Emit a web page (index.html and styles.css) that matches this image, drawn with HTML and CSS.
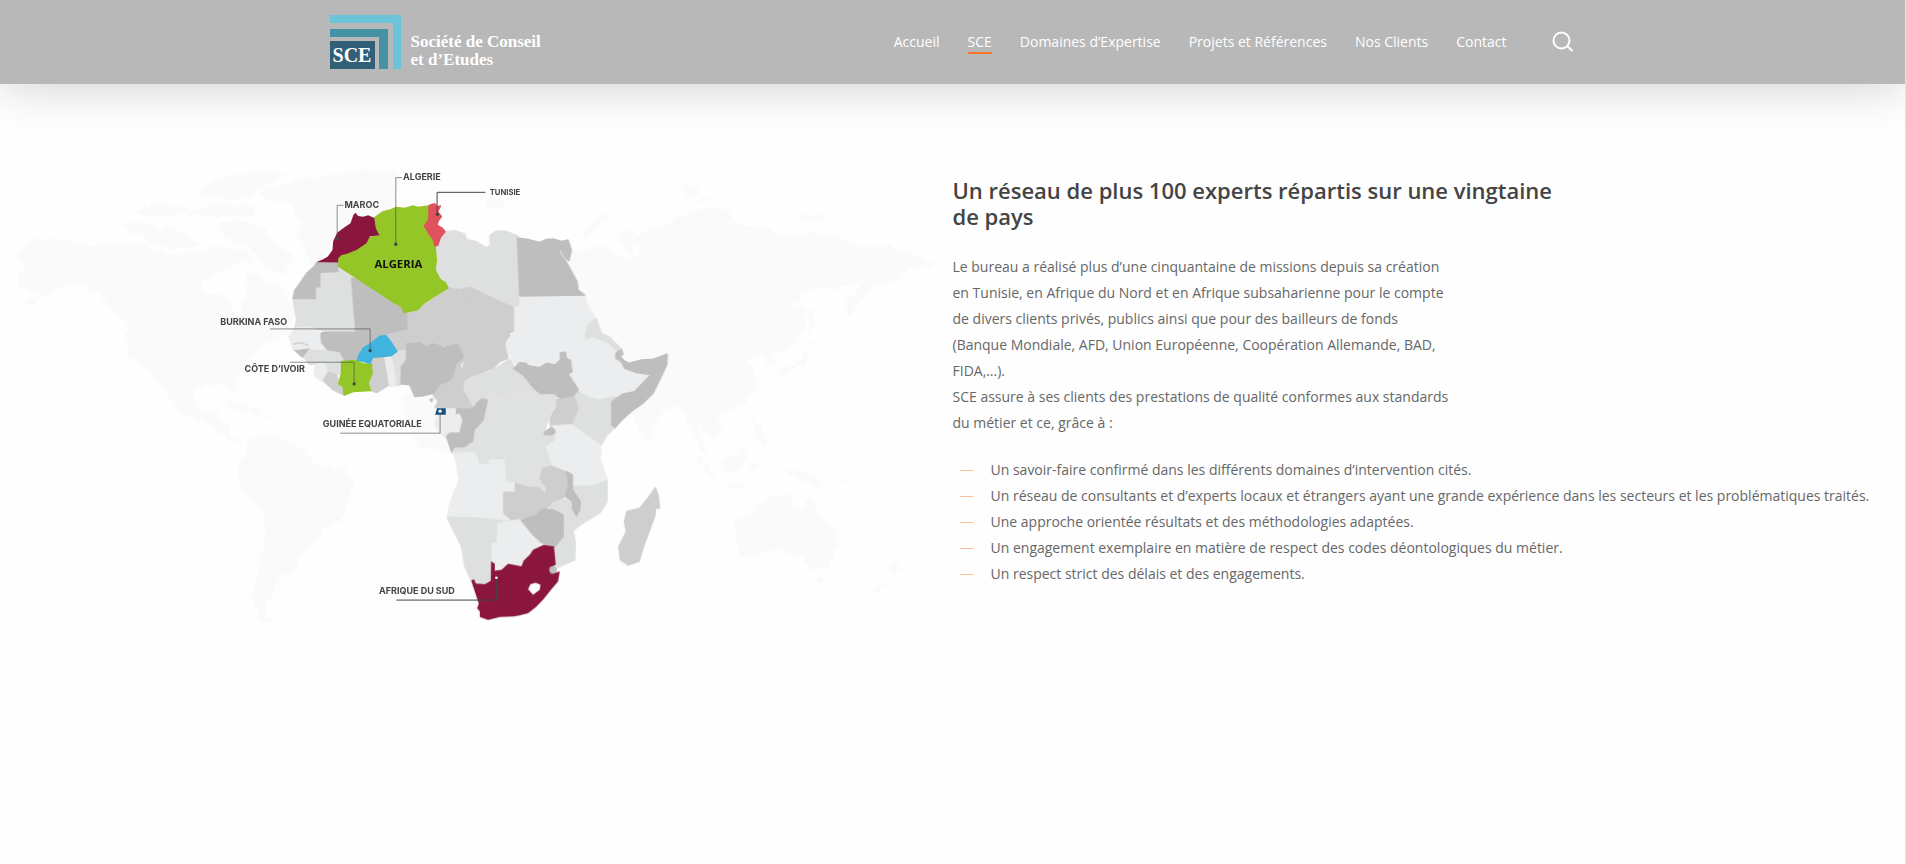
FILE: index.html
```html
<!DOCTYPE html>
<html lang="fr">
<head>
<meta charset="utf-8">
<meta name="viewport" content="width=device-width, initial-scale=1">
<title>SCE - Société de Conseil et d’Etudes</title>
<link rel="stylesheet" href="styles.css">
</head>
<body>
<header class="site-header">
  <div class="header-inner">
    <a class="logo" href="#" aria-label="Société de Conseil et d’Etudes">
      <span class="logo-mark">
        <svg class="logo-shape" viewBox="0 0 71 54" aria-hidden="true">
          <path fill="#6cc4da" d="M0 0h71v54h-8V8H0z"/>
          <path fill="#4492a3" d="M0 14h58v40h-9V22H0z"/>
          <path fill="#305f77" d="M0 26h45v28H0z"/>
        </svg>
        <span class="logo-sce">SCE</span>
      </span>
      <span class="logo-name">Société de Conseil<br>et d’Etudes</span>
    </a>
    <nav class="main-nav" aria-label="Menu principal">
      <a href="#">Accueil</a>
      <a class="current" href="#" aria-current="page">SCE</a>
      <a href="#">Domaines d’Expertise</a>
      <a href="#">Projets et Références</a>
      <a href="#">Nos Clients</a>
      <a href="#">Contact</a>
    </nav>
    <button class="search" type="button" aria-label="Rechercher">
      <svg viewBox="0 0 22 22" aria-hidden="true"><circle cx="9.5" cy="9.5" r="8"/><path d="M15 15l5.5 5"/></svg>
    </button>
  </div>
</header>

<main class="network">
  <div class="map">
    <svg viewBox="0 0 2859 1440" role="img" aria-label="Carte des pays d’intervention">
      <defs>
        <filter id="coast" x="0" y="0" width="1" height="1" color-interpolation-filters="sRGB">
          <feTurbulence type="fractalNoise" baseFrequency="0.05" numOctaves="2" seed="4"/>
          <feDisplacementMap in="SourceGraphic" scale="24" xChannelSelector="R" yChannelSelector="G"/>
        </filter>
      </defs>
      <g class="world" filter="url(#coast)">
        <path d="M45 285L90 240L130 235L200 240L290 255L370 245L440 255L500 285L560 280L620 270L640 250L690 270L740 270L760 300L700 315L640 345L605 370L610 400L670 410L700 430L700 455L720 465L730 425L740 395L735 345L770 340L800 365L840 375L870 420L885 450L870 520L810 545L770 570L740 620L705 655L710 700L695 705L675 670L620 675L585 690L580 725L600 755L640 755L655 745L660 780L690 800L700 840L740 845L720 855L670 830L620 785L550 765L530 740L490 690L440 620L385 590L378 520L385 500L330 440L290 395L220 370L180 385L100 425L50 445L120 400L60 385L45 350L80 320Z"/>
        <path d="M835 75L900 55L1000 45L1090 28L1190 38L1210 70L1185 110L1190 150L1150 165L1060 200L1000 240L970 290L960 330L930 320L915 270L890 230L905 190L870 130L800 120L780 95Z"/>
        <path d="M600 90L640 60L720 40L820 35L860 45L800 75L740 110L690 120L620 105Z"/>
        <path d="M370 195L390 185L470 195L470 220L400 225Z"/>
        <path d="M440 215L500 200L560 220L600 255L520 270L430 245Z"/>
        <path d="M390 155L470 130L560 140L540 165L430 170Z"/>
        <path d="M560 150L650 135L760 140L770 165L680 170L590 170Z"/>
        <path d="M640 190L720 180L790 205L840 260L880 290L850 345L790 320L750 260L690 245Z"/>
        <path d="M665 730L720 732L790 755L770 765L700 745ZM780 765L830 768L800 775Z"/>
        <path d="M740 845L780 820L850 835L900 860L950 910L1040 935L1068 965L1045 1020L1020 1085L970 1105L940 1150L900 1190L890 1230L840 1250L820 1300L795 1340L800 1370L825 1388L780 1380L755 1320L775 1240L790 1150L795 1060L750 1020L710 960L715 920L740 880Z"/>
        <path d="M1215 705L1300 690L1400 720L1400 860L1340 870L1260 865L1215 790Z"/>
        <path d="M1450 130L1480 110L1520 120L1500 150L1470 145Z"/>
        <g transform="translate(1800)">
          <path d="M-100 275L-20 265L10 255L60 285L100 298L125 265L105 250L110 230L140 205L210 190L240 165L330 140L400 155L380 190L500 200L540 230L590 230L640 215L740 240L800 265L860 255L930 275L960 295L1005 305L990 325L950 315L900 345L910 360L820 375L770 440L745 475L735 430L790 370L805 350L760 375L690 385L640 385L580 435L620 450L618 500L580 555L520 585L530 620L500 610L480 580L440 600L465 625L468 690L430 735L360 765L345 760L370 800L340 840L300 800L290 760L300 830L330 890L320 900L285 830L240 735L200 750L165 790L150 845L135 848L100 770L60 720L-100 560Z"/>
          <path d="M-55 225L-10 170L70 148L10 180L-40 232ZM60 215L100 205L100 285L60 250ZM250 75L290 85L300 110L260 105ZM300 115L345 115L310 125ZM595 162L660 165L695 177L600 180ZM920 235L945 235L930 240Z"/>
          <path d="M628 445L638 450L645 500L630 530ZM625 540L655 545L635 562ZM625 565L620 600L570 630L540 655L535 640L600 605ZM460 720L470 712L462 738ZM460 768L475 790L505 850L490 860L462 800Z"/>
          <path d="M265 868L310 905L350 945L340 955L300 915ZM350 960L400 972L460 985L400 985ZM370 900L410 890L440 865L440 910L410 940L375 930ZM450 910L490 905L465 930L460 950ZM545 920L580 935L640 940L690 990L640 980L590 955ZM700 945L740 960L780 990L720 960Z"/>
          <path d="M405 1085L460 1060L500 1015L550 1005L585 1005L575 1035L610 1055L630 1000L655 1060L710 1110L715 1150L685 1225L640 1230L610 1195L575 1185L540 1165L480 1180L420 1195ZM648 1250L674 1252L660 1274ZM873 1202L908 1225L880 1250ZM875 1248L835 1305L818 1297Z"/>
        </g>
      </g>

      <g class="africa" transform="translate(600)">
        <path class="c2" d="M736 215L765 212L795 222L800 238L830 245L858 263L870 258L871 225L890 213L920 214L955 228L960 440L945 445L815 382L780 390L745 384L735 366L722 360L708 330L710 300L706 258L714 256L722 232Z"/>
        <path class="c2" d="M413 318L470 355L455 355L468 517L385 517L362 510L345 508L325 500L300 500L284 505L290 480L280 425L279 416L346 416L346 382L360 380L360 337L413 335Z"/>
        <path class="c4" d="M349 309L413 309L413 335L360 337L360 380L346 382L346 416L279 416L285 390L300 370L320 340L345 318Z"/>
        <path class="c4" d="M455 355L475 355L583 428L606 440L612 458L624 458L624 510L580 522L560 524L540 530L510 550L490 572L475 590L470 602L430 602L418 578L380 574L362 550L357 535L365 518L390 517L468 517Z"/>
        <path class="c3" d="M624 458L652 450L745 384L780 390L808 382L806 470L775 520L775 555L740 556L700 560L660 552L620 552L612 580L594 575L575 545L560 524L624 510Z"/>
        <path class="c3" d="M810 382L945 445L945 515L930 518L932 545L918 565L925 595L900 605L880 625L840 640L808 652L790 620L795 590L780 555L775 520L806 470Z"/>
        <path class="c1" d="M284 505L325 500L358 515L362 550L380 572L330 570L300 565L280 570L268 530Z"/>
        <path class="river" d="M280 553L300 548L326 556"/>
        <path class="c4" d="M285 572L328 568L325 580L308 592Z"/>
        <path class="c2" d="M328 570L380 574L418 578L430 602L425 640L410 645L395 635L382 640L375 620L350 612L330 615L312 592Z"/>
        <path class="c1" d="M342 625L355 610L378 615L382 635L365 665L345 650Z"/>
        <path class="c3" d="M370 662L385 637L410 645L420 675L432 685L432 705L400 690Z"/>
        <path class="c3" d="M512 612L515 594L555 592L568 675L530 698L508 690L505 670L517 640Z"/>
        <path class="c2" d="M575 592L594 575L615 572L620 600L605 620L603 675L585 678L583 640Z"/>
        <path class="c1" d="M555 592L575 597L585 650L585 678L570 680L565 650Z"/>
        <path class="c3" d="M790 560L795 590L780 620L810 640L808 655L795 665L793 690L818 733L818 748L705 744L715 725L700 705L700 685L740 665L770 620Z"/>
        <path class="c4" d="M620 552L660 549L680 560L700 552L735 562L775 553L790 590L770 610L755 655L738 668L720 672L700 700L670 708L645 710L630 675L603 672L605 620L620 600Z"/>
        <path class="c4" d="M691 720L698 716L696 726Z"/>
      </g>
      <g class="africa" transform="translate(1320 120)">
        <path class="c1" d="M240 288L435 285L445 320L470 357L445 375L437 415L430 430L415 455L400 490L396 510L380 480L377 457L362 458L362 480L345 495L300 500L245 492L225 490L213 475L200 445L200 425L225 395L225 322L240 320Z"/>
        <path class="c4" d="M233 114L265 118L300 127L320 118L340 117L365 124L385 120L395 150L388 182L380 178L362 150L356 152L382 190L412 245L415 270L435 285L240 288Z"/>
        <path class="c1" d="M437 415L460 410L500 425L530 455L535 475L555 505L600 520L633 524L585 575L550 582L530 590L480 600L450 595L415 575L400 540L385 522L398 505L392 480L415 455Z"/>
        <path class="c2" d="M470 357L485 400L510 412L548 450L538 458L500 425L460 410L437 415L445 375Z"/>
        <path class="c2" d="M415 575L450 595L480 600L530 590L516 610L516 675L527 683L500 708L485 735L460 720L395 675L416 625L403 592Z"/>
        <path class="c4" d="M528 475L530 458L546 450L550 462L542 470L556 484L570 490L605 480L640 478L683 462L681 495L660 540L640 580L610 610L575 635L545 662L527 683L516 675L516 606L550 582L585 575L633 524L590 518L555 505L545 485Z"/>
        <path class="c2" d="M75 545L95 532L150 515L190 490L210 478L225 502L250 525L285 573L225 580L190 588L145 577L140 598L120 600L98 613L85 590L73 570Z"/>
        <path class="c4" d="M222 506L240 488L258 490L268 498L300 503L320 490L345 495L362 480L362 458L377 457L380 475L392 482L397 515L385 522L400 545L416 570L400 590L365 598L345 585L300 585L280 562L250 525Z"/>
        <path class="c3" d="M345 598L365 598L403 590L416 625L395 675L332 678L330 650L348 625Z"/>
        <path class="c1" d="M14 627L50 627L50 640L70 640L60 695L30 700L20 715L0 700L-15 675L-8 645L14 645Z"/>
      </g>
      <g class="africa" transform="translate(1200 720)">
        <path class="c0" d="M265 -23L310 -12L345 -20L405 -27L420 -15L465 -15L468 10L450 50L435 90L438 140L457 195L430 205L420 240L440 270L440 285L420 265L385 260L345 250L318 247L312 180L270 180L268 195L237 193L228 160L153 158L180 140L215 135L225 90L250 60Z"/>
        <path class="c4" d="M170 27L218 28L230 10L245 -2L263 0L250 60L223 90L218 125L195 140L165 142L155 155L140 110L150 100L180 100L190 60L182 40L170 40Z"/>
        <path class="c1" d="M160 160L228 160L237 193L268 195L270 180L312 180L318 247L347 250L347 278L312 278L312 345L335 362L290 365L240 355L142 353L150 310L178 240L170 190Z"/>
        <path class="c3" d="M312 278L347 278L347 250L385 262L420 265L440 285L440 265L420 235L430 205L457 198L500 215L507 250L497 290L450 318L410 345L365 362L335 360L312 340Z"/>
        <path class="c2" d="M518 255L580 255L622 238L622 305L600 340L550 370L520 392L527 430L525 480L470 505L465 440L490 410L490 345L450 325L460 308L497 298L518 305L518 325L530 348L542 320L518 270Z"/>
        <path class="c1" d="M455 78L515 75L600 135L605 155L600 175L622 238L580 255L520 255L518 225L500 212L457 195L440 140L462 118Z"/>
        <path class="c4" d="M500 215L518 225L518 270L542 305L540 330L530 348L518 325L518 305L497 290L507 250Z"/>
        <path class="c2" d="M440 110L466 106L460 122L440 135Z"/>
        <path class="c4" d="M433 97L455 82L464 90L466 98L455 105L435 105Z"/>
        <path class="c2" d="M142 353L240 355L330 365L294 370L292 430L275 432L273 540L255 552L230 550L213 540L195 500L185 440L160 390Z"/>
        <path class="c1" d="M294 370L360 360L400 405L425 430L390 460L365 495L325 492L285 515L277 485L277 430L292 430Z"/>
        <path class="c4" d="M365 362L410 345L428 327L460 330L490 345L490 410L465 440L425 428L400 405Z"/>
        <path class="c3" d="M767 263L775 285L780 325L768 325L765 350L735 430L718 485L685 496L662 480L657 440L680 395L674 365L682 335L720 325L745 295Z"/>
        <path class="maroon" d="M214 542L223 538L228 551L255 553L273 543L274 484L285 492L285 513L305 510L325 492L365 499L372 482L390 465L400 450L432 435L463 440L468 495L450 505L455 522L480 515L475 545L455 568L430 600L408 622L385 640L355 648L340 650L300 652L265 661L240 652L240 635L232 625L237 612Z"/>
        <circle class="c4" cx="460" cy="510" r="11"/>
        <path class="hole" d="M385 568L392 553L408 549L422 555L420 570L400 585Z"/>
      </g>
      <g class="africa" transform="translate(600)">
        <path class="green" d="M525 173L550 155L572 150L590 142L615 145L640 138L655 142L688 138L685 165L687 180L674 198L690 225L706 258L710 300L706 330L722 360L737 368L745 384L700 412L670 432L652 450L612 458L606 440L583 428L415 318L415 296L425 285L460 276L500 250L510 233L539 226L530 215Z"/>
        <path class="maroon" d="M349 307L370 298L384 290L398 270L400 244L412 218L430 205L452 190L461 164L467 158L475 168L490 170L505 166L524 174L527 200L532 214L539 226L510 230L500 250L470 270L440 282L425 285L415 296L415 308Z"/>
        <path class="red" d="M688 136L705 131L712 140L722 138L714 155L725 170L716 182L712 195L728 205L736 215L722 232L714 256L706 258L700 238L690 225L674 198L687 180Z"/>
        <path class="green" d="M425 605L450 602L470 602L490 612L515 612L517 640L505 670L513 692L460 695L433 706L430 680L416 672L425 640Z"/>
        <path class="blue" d="M470 602L475 585L490 562L510 550L540 527L560 525L575 545L594 575L575 590L520 594L512 612L490 607Z"/>
        <path class="navy" d="M712 745L738 745L738 765L706 765Z"/>
      </g>

      <g class="leads">
        <path d="M1207 53H1188V252M1031 136H1012V236M810 507H1111V572M870 607H1063V672M1021 820H1321V756"/>
        <path class="strong" d="M1457 97H1312V163M1190 1321H1490V1256"/>
      </g>
      <g class="dots">
        <circle cx="1188" cy="253" r="5"/><circle cx="1012" cy="236" r="5"/><circle cx="1111" cy="572" r="5"/><circle cx="1063" cy="672" r="5"/><circle cx="1313" cy="163" r="5"/>
        <circle class="light" cx="1321" cy="754" r="5"/><circle class="light" cx="1490" cy="1254" r="4"/>
      </g>
      <g class="labels">
        <text x="1210" y="61">ALGERIE</text>
        <text x="1034" y="143">MAROC</text>
        <text class="small" x="1470" y="105">TUNISIE</text>
        <text x="661" y="496">BURKINA FASO</text>
        <text x="734" y="637">CÔTE D’IVOIR</text>
        <text x="969" y="802">GUINÉE EQUATORIALE</text>
        <text x="1138" y="1303">AFRIQUE DU SUD</text>
        <text class="country" x="1124" y="323">ALGERIA</text>
      </g>
    </svg>
  </div>

  <section class="copy">
    <h1>Un réseau de plus 100 experts répartis sur une vingtaine de pays</h1>
    <p>Le bureau a réalisé plus d’une cinquantaine de missions depuis sa création en Tunisie, en Afrique du Nord et en Afrique subsaharienne pour le compte de divers clients privés, publics ainsi que pour des bailleurs de fonds (Banque Mondiale, AFD, Union Européenne, Coopération Allemande, BAD, FIDA,…).<br>SCE assure à ses clients des prestations de qualité conformes aux standards du métier et ce, grâce à :</p>
    <ul>
      <li>Un savoir-faire confirmé dans les différents domaines d’intervention cités.</li>
      <li>Un réseau de consultants et d’experts locaux et étrangers ayant une grande expérience dans les secteurs et les problématiques traités.</li>
      <li>Une approche orientée résultats et des méthodologies adaptées.</li>
      <li>Un engagement exemplaire en matière de respect des codes déontologiques du métier.</li>
      <li>Un respect strict des délais et des engagements.</li>
    </ul>
  </section>
</main>
</body>
</html>
```
FILE: styles.css
```css
* { box-sizing: border-box; }

body {
  min-height: 100vh;
  margin: 0;
  border-right: 1px solid #e2e2e2;
  background: #fefefe;
  color: #676767;
  font: 14px/26px "Open Sans", "Noto Sans", sans-serif;
}

/* Header */
.site-header {
  background: #b8b8b8;
  box-shadow: 0 0 50px rgba(0, 0, 0, .2);
}
.header-inner {
  display: flex;
  align-items: center;
  max-width: 1426px;
  height: 84px;
  margin: 0 auto;
  padding: 0 92px 0 90px;
}
.logo {
  display: flex;
  align-items: flex-end;
  gap: 10px;
  margin-right: auto;
  color: #fff;
  font: bold 17px/18px "Liberation Serif", serif;
  text-decoration: none;
}
.logo-mark { display: grid; width: 71px; }
.logo-shape, .logo-sce { grid-area: 1 / 1; }
.logo-shape { display: block; width: 71px; height: 54px; }
.logo-sce {
  align-self: end;
  width: 45px;
  font-size: 20px;
  line-height: 28px;
  text-align: center;
}
.main-nav { display: flex; gap: 28px; }
.main-nav a {
  padding-top: 2px;
  color: #fff;
  line-height: 20px;
  text-decoration: none;
  border-bottom: 2px solid transparent;
}
.main-nav .current { border-color: #fb7527; }
.search {
  width: 22px;
  height: 22px;
  margin-left: 45px;
  padding: 0;
  border: 0;
  background: none;
}
.search svg { display: block; fill: none; stroke: #fff; stroke-width: 2; }

/* Content */
.network {
  display: grid;
  grid-template-columns: 1fr 1fr;
  padding-top: 76px;
}
.copy { padding-top: 17px; }
h1 {
  max-width: 620px;
  margin: 0 0 25px;
  color: #444;
  font-size: 22px;
  line-height: 26px;
  font-weight: 600;
}
p { max-width: 500px; margin: 0 0 21px; }
ul { margin: 0; padding: 0; list-style: none; }
li { display: flex; align-items: center; white-space: nowrap; }
li::before {
  content: "";
  width: 13px;
  height: 1px;
  margin: 0 18px 0 7px;
  background: #fbbf9a;
}

/* Map */
.map svg { display: block; width: 100%; }
.world { fill: #fafafa; }
.africa path { stroke-width: 4; stroke-linejoin: round; }
.c0 { fill: #e0e2e1; stroke: #e0e2e1; }
.c1 { fill: #ebedef; stroke: #ebedef; }
.c2 { fill: #dee0df; stroke: #dee0df; }
.c3 { fill: #cecece; stroke: #cecece; }
.c4 { fill: #bebebe; stroke: #bebebe; }
.maroon { fill: #8a163e; }
.green { fill: #95c627; stroke: #95c627; }
.red { fill: #e0525d; stroke: #e0525d; }
.blue { fill: #41b3df; }
.navy { fill: #15507f; }
.hole { fill: #fefefe; }
.river { fill: none; stroke: #cecece; }
.leads { fill: none; stroke: #444; stroke-opacity: .6; stroke-width: 3; }
.leads .strong { stroke-opacity: 1; }
.dots { fill: #444; }
.dots .light { fill: #fff; }
.labels { fill: #444; font: bold 27px Inter, sans-serif; }
.labels .small { font-size: 23px; }
.labels .country { fill: #111; font: bold 34px "Open Sans", sans-serif; }
```
